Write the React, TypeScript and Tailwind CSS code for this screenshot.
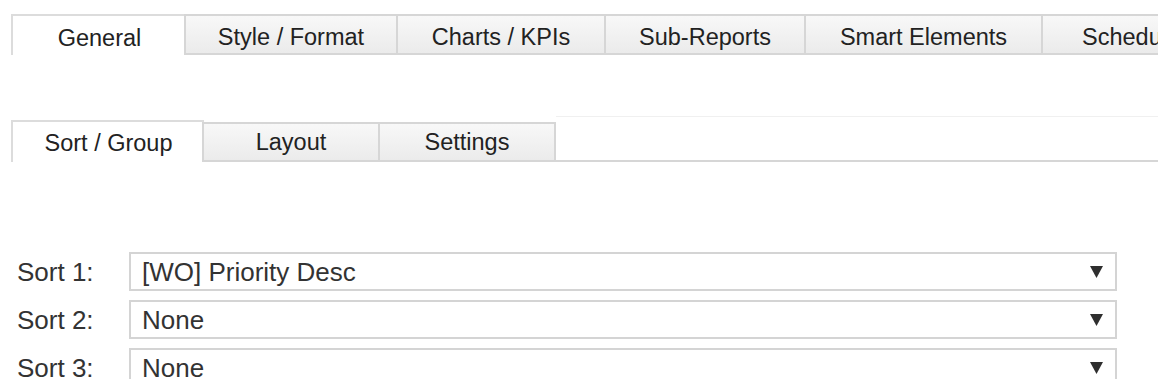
import React from "react";

const topTabs = [
  { label: "General", w: 175, active: true },
  { label: "Style / Format", w: 212 },
  { label: "Charts / KPIs", w: 208 },
  { label: "Sub-Reports", w: 200 },
  { label: "Smart Elements", w: 237 },
  { label: "Schedule", w: 178 },
];

const subTabs = [
  { label: "Sort / Group", w: 193, active: true },
  { label: "Layout", w: 176 },
  { label: "Settings", w: 176 },
];

const rows = [
  { label: "Sort 1:", value: "[WO] Priority Desc" },
  { label: "Sort 2:", value: "None" },
  { label: "Sort 3:", value: "None" },
];

function Arrow() {
  return (
    <svg width="13" height="12" viewBox="0 0 13 12" className="shrink-0">
      <polygon points="0,0 13,0 6.5,12" fill="#2f2f2f" />
    </svg>
  );
}

export default function App() {
  return (
    <div
      className="w-[1158px] h-[379px] overflow-hidden bg-white text-[#222]"
      style={{ fontFamily: '"Liberation Sans", Arial, sans-serif' }}
    >
      {/* Top tabs */}
      <div className="flex pt-[14px] pl-[11px] whitespace-nowrap">
        {topTabs.map((t) =>
          t.active ? (
            <div
              key={t.label}
              className="shrink-0 h-[41px] border-t-2 border-l-2 border-[#dcdcdc] bg-white flex items-center justify-center pt-[6px] text-[23.5px] leading-none"
              style={{ width: t.w }}
            >
              {t.label}
            </div>
          ) : (
            <div
              key={t.label}
              className="shrink-0 h-[41px] border-2 border-[#d6d6d6] bg-gradient-to-b from-[#f8f8f8] to-[#ebebeb] flex items-center justify-center pt-[6px] text-[23.5px] leading-none -ml-[2px]"
              style={{ width: t.w + 2 }}
            >
              {t.label}
            </div>
          )
        )}
      </div>

      {/* Sub tabs */}
      <div className="flex items-end mt-[61px] pl-[11px] whitespace-nowrap">
        {subTabs.map((t) =>
          t.active ? (
            <div
              key={t.label}
              className="shrink-0 h-[42px] border-t-2 border-l-2 border-[#dcdcdc] bg-white flex items-center justify-center pt-[4px] text-[23.5px] leading-none"
              style={{ width: t.w }}
            >
              {t.label}
            </div>
          ) : (
            <div
              key={t.label}
              className="shrink-0 h-[40px] border-2 border-[#d6d6d6] bg-gradient-to-b from-[#f8f8f8] to-[#ebebeb] flex items-center justify-center pt-[2px] text-[23.5px] leading-none -ml-[2px]"
              style={{ width: t.w + 2 }}
            >
              {t.label}
            </div>
          )
        )}
        <div className="flex-1 h-[46px] border-t border-t-[#f0f0f0] border-b-2 border-b-[#d6d6d6]" />
      </div>

      {/* Form */}
      <div className="mt-[90px] pl-[17px] flex flex-col gap-[9px] text-[26px] text-[#333]">
        {rows.map((r) => (
          <div key={r.label} className="flex items-center h-[39px]">
            <div className="w-[112px] shrink-0 leading-none">{r.label}</div>
            <div className="w-[988px] h-[39px] border-2 border-[#d4d4d4] bg-white flex items-center pl-[11px] pr-[12px]">
              <span className="flex-1 leading-none">{r.value}</span>
              <Arrow />
            </div>
          </div>
        ))}
      </div>
    </div>
  );
}
